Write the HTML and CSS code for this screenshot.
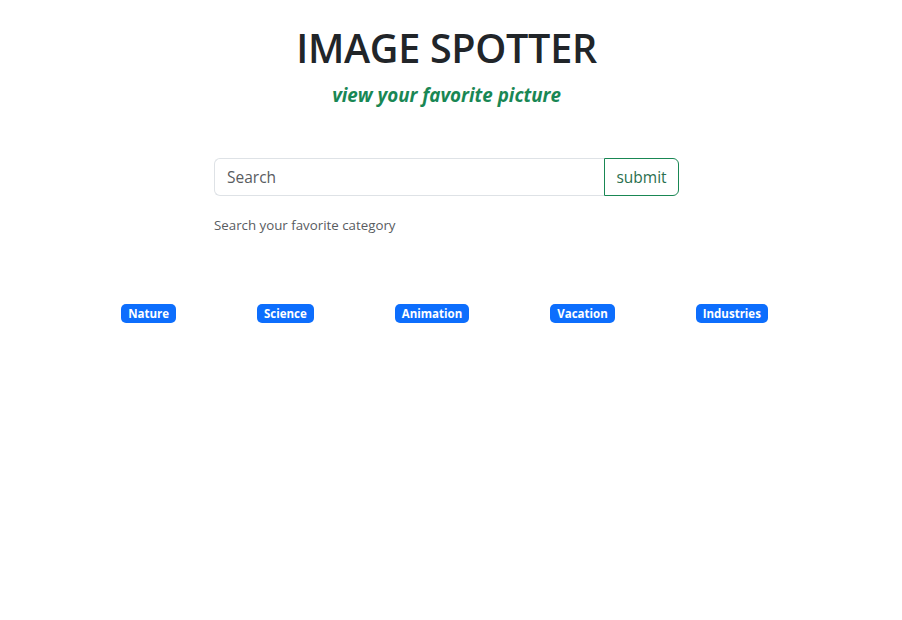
FILE: index.html
```html
<!DOCTYPE html>
<html lang="en">
<head>
<meta charset="utf-8">
<title>Image Spotter</title>
<link rel="stylesheet" href="styles.css">
</head>
<body>
<header class="hero">
  <h1 class="title">IMAGE SPOTTER</h1>
  <p class="subtitle">view your favorite picture</p>
</header>
<main class="search-area">
  <form class="search-form">
    <div class="input-group">
      <input class="search-input" type="text" placeholder="Search">
      <button class="submit-btn" type="button">submit</button>
    </div>
    <div class="form-text">Search your favorite category</div>
  </form>
  <div class="categories">
    <span class="badge">Nature</span>
    <span class="badge">Science</span>
    <span class="badge">Animation</span>
    <span class="badge">Vacation</span>
    <span class="badge">Industries</span>
  </div>
</main>
</body>
</html>
```

FILE: styles.css
```css
* { box-sizing: border-box; }
body {
  margin: 0;
  padding-right: 9px;
  font-family: "Open Sans", "Noto Sans", sans-serif;
  color: #212529;
  background: #fff;
}
.hero {
  text-align: center;
  padding-top: 24px;
}
.title {
  margin: 0;
  font-size: 39.5px;
  font-weight: 600;
  line-height: 48px;
  letter-spacing: -0.3px;
  color: #212529;
}
.subtitle {
  margin: 9px 0 0;
  font-size: 18.8px;
  font-style: italic;
  font-weight: 700;
  line-height: 28px;
  color: #198754;
}
.search-area {
  padding-top: 49px;
}
.search-form {
  width: 465px;
  margin: 0 auto;
}
.input-group {
  display: flex;
  height: 38px;
}
.search-input {
  flex: 1;
  min-width: 0;
  border: 1px solid #dee2e6;
  border-right: none;
  border-radius: 6px 0 0 6px;
  padding: 6px 12px;
  font: inherit;
  font-size: 15.5px;
  color: #212529;
  outline: none;
}
.search-input::placeholder { color: #595c5f; }
.submit-btn {
  width: 75px;
  border: 1px solid #198754;
  border-radius: 0 6px 6px 0;
  background: #fff;
  color: #2a6f4e;
  font: inherit;
  font-size: 15.5px;
  padding: 0;
}
.form-text {
  margin-top: 19px;
  font-size: 13.3px;
  line-height: 20px;
  color: #595c5f;
}
.categories {
  display: flex;
  justify-content: center;
  gap: 81px;
  padding-right: 4px;
  margin-top: 69px;
}
.badge {
  display: inline-block;
  background: #0d6efd;
  color: #fff;
  font-size: 11.5px;
  font-weight: 700;
  line-height: 11px;
  padding: 4px 7px;
  border-radius: 5px;
}
```
